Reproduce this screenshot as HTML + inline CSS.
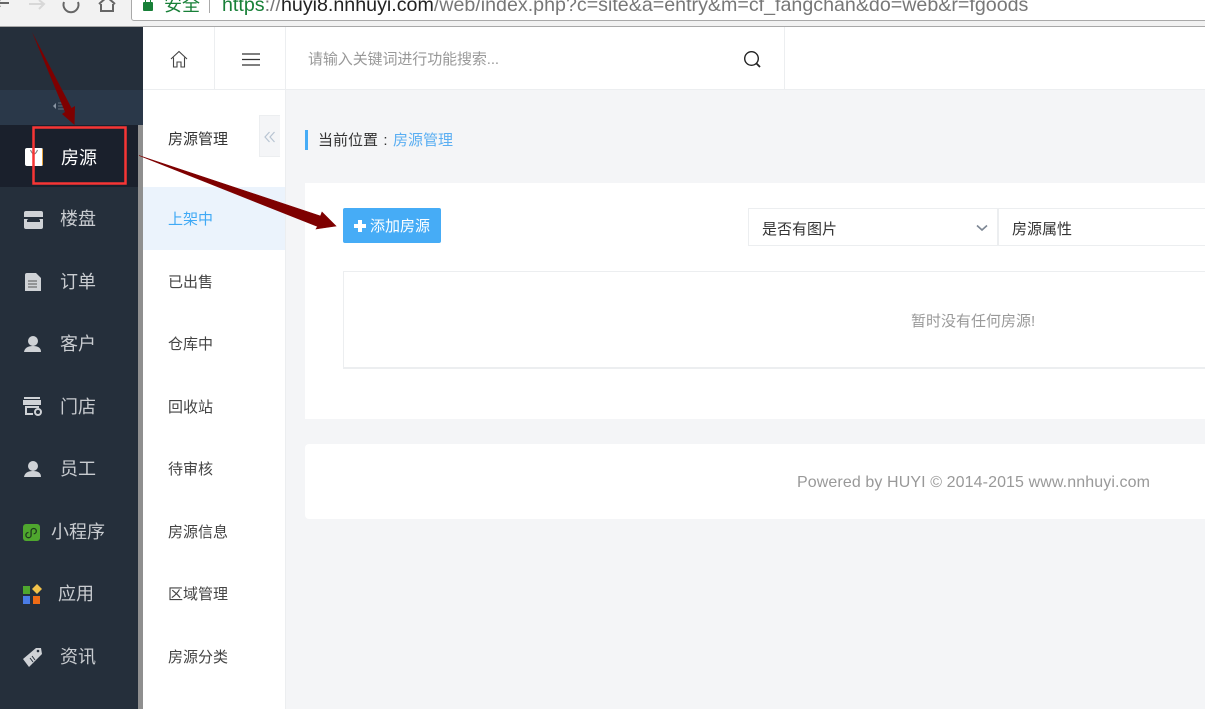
<!DOCTYPE html>
<html lang="zh"><head><meta charset="utf-8"><title>房源管理</title>
<style>
html,body{margin:0;padding:0}
body{width:1205px;height:709px;overflow:hidden;position:relative;background:#f4f5f7;font-family:"Liberation Sans","Noto Sans CJK SC",sans-serif;color:#333}
.a{position:absolute}
.t{position:absolute;white-space:nowrap;line-height:20px}
.m{font-size:18px;color:#c9ccd0}
.s{font-size:15px;color:#444;left:168px}
</style></head><body>
<!-- browser chrome -->
<div class="a" style="left:0;top:0;width:1205px;height:26px;background:#f2f2f2"></div>
<div class="a" style="left:0;top:26px;width:1205px;height:1px;background:#a8a8a8"></div>
<div class="a" style="left:131px;top:-10px;width:1080px;height:31px;background:#fff;border:1px solid #a9a9a9;border-radius:3px;box-sizing:border-box"></div>
<svg class="a" style="left:0;top:0" width="140" height="20" fill="none">
<path d="M-2 3H9M0 0L-3 3L0 7" stroke="#666" stroke-width="2"/>
<path d="M29 4H44M39 0L44 4L39 9" stroke="#d8d8d8" stroke-width="2"/>
<path d="M78 2A7.500 7.500 0 1 1 64 2" stroke="#666" stroke-width="2"/>
<path d="M101 4V11H113V4" stroke="#666" stroke-width="2"/>
<path d="M99 4L107 -3L115 4" stroke="#666" stroke-width="2"/>
</svg>
<div class="a" style="left:143px;top:2px;width:10px;height:9px;background:#188038;border-radius:1px"></div>
<div class="a" style="left:145px;top:-2px;width:4px;height:4px;border:1.500px solid #188038"></div>
<div class="t" style="left:164px;top:-5px;font-size:18px;color:#188038">安全</div>
<div class="a" style="left:209px;top:0;width:1px;height:13px;background:#aaa"></div>
<div class="t" style="left:222px;top:-5px;font-size:19.650px"><span style="color:#188038">https</span><span style="color:#777">://</span><span style="color:#222">huyi8.nnhuyi.com</span><span style="color:#777">/web/index.php?c=site&amp;a=entry&amp;m=cf_fangchan&amp;do=web&amp;r=fgoods</span></div>

<!-- sidebar -->
<div class="a" style="left:0;top:27px;width:143px;height:682px;background:#252f3b"></div>
<div class="a" style="left:0;top:90px;width:143px;height:35px;background:#2a3849"></div>
<div class="a" style="left:0;top:125px;width:138px;height:62px;background:#1a202c"></div>
<div class="a" style="left:138px;top:125px;width:5px;height:584px;background:#8f8f8f"></div>
<svg class="a" style="left:52px;top:102px" width="20" height="10"><path d="M1 4L4 1V7Z" fill="#8a95a3"/><path d="M6 1H15M6 4H15M6 7H15" stroke="#626e7c"/></svg>

<svg class="a" style="left:0;top:125px" width="138" height="584" fill="#cfd2d6">
<rect x="25" y="23" width="18" height="18" rx="2" fill="#fff"/><rect x="42" y="24" width="1" height="16" fill="#e6a23c"/><path d="M30.500 25Q34 33 37.500 25" stroke="#777" fill="none"/>
<path d="M26 86H41Q43 86 43 88V92H24V88Q24 86 26 86ZM24 94H43V102Q43 104 41 104H26Q24 104 24 102Z"/><path d="M27 95L31 92L34 94L37 92L40 95V97H27Z" fill="#252f3b"/>
<path d="M25 150Q25 148 27 148H36L41 153V166H25Z"/><path d="M28 156H37M28 159H37M28 162H37" stroke="#555"/>
<circle cx="33" cy="216" r="5"/><path d="M24 227Q25 221 33 221Q41 221 41 227Z"/>
<path d="M24 272H40V274H24ZM23 275H41V280H23ZM25 281H39V283H27V288H33V290H25Z"/><circle cx="38" cy="287" r="3" fill="none" stroke="#cfd2d6" stroke-width="2"/>
<circle cx="33" cy="341" r="5"/><path d="M24 352Q25 346 33 346Q41 346 41 352Z"/>
<rect x="23" y="399" width="17" height="17" rx="3" fill="#4fa72e"/><path d="M28.500 407.500a2.600 2.600 0 1 0 2.600 2.600v-4a2.600 2.600 0 1 1 2.600 2.600" stroke="#1f3a1f" fill="none" stroke-width="1.300"/>
<rect x="23" y="461" width="7" height="8" fill="#4fa72e"/><rect x="23" y="471" width="7" height="8" fill="#4a7ce6"/><rect x="33" y="471" width="7" height="8" fill="#ef6c16"/><path d="M37 459L42 464L37 469L32 464Z" fill="#f2c14a"/>
<path d="M23 534L36 523L41 523L42 529L29 542Z"/><path d="M32 531L35 535M30 533L33 537" stroke="#252f3b"/><circle cx="38" cy="526" r="1.300" fill="#252f3b"/>
</svg>
<div class="t m" style="left:61px;top:148px;color:#fff">房源</div>
<div class="t m" style="left:60px;top:209px">楼盘</div>
<div class="t m" style="left:60px;top:272px">订单</div>
<div class="t m" style="left:60px;top:334px">客户</div>
<div class="t m" style="left:60px;top:397px">门店</div>
<div class="t m" style="left:60px;top:459px">员工</div>
<div class="t m" style="left:51px;top:522px">小程序</div>
<div class="t m" style="left:58px;top:584px">应用</div>
<div class="t m" style="left:60px;top:647px">资讯</div>

<!-- top bar -->
<div class="a" style="left:143px;top:27px;width:1062px;height:62px;background:#fff"></div>
<div class="a" style="left:143px;top:89px;width:1062px;height:1px;background:#eceef0"></div>
<div class="a" style="left:214px;top:27px;width:1px;height:62px;background:#eceef0"></div>
<div class="a" style="left:285px;top:27px;width:1px;height:62px;background:#eceef0"></div>
<div class="a" style="left:784px;top:27px;width:1px;height:62px;background:#eceef0"></div>
<svg class="a" style="left:170px;top:50px" width="18" height="18" fill="none" stroke="#444" stroke-width="1.100"><path d="M1 9L9 1.500L17 9M3.500 7.500V17H7V12H11V17H14.500V7.500"/></svg>
<svg class="a" style="left:241px;top:52px" width="20" height="16" stroke="#333" stroke-width="1.200"><path d="M1 2H19M1 7.500H19M1 13H19"/></svg>
<div class="t" style="left:308px;top:50px;font-size:15px;letter-spacing:-.1px;color:#999">请输入关键词进行功能搜索...</div>
<svg class="a" style="left:743px;top:50px" width="19" height="19" fill="none" stroke="#222" stroke-width="1.400"><circle cx="8.500" cy="8.500" r="6.800"/><path d="M13.500 13.500L17 17" stroke-width="1.800"/></svg>

<!-- subnav -->
<div class="a" style="left:143px;top:90px;width:142px;height:619px;background:#fff"></div>
<div class="a" style="left:285px;top:90px;width:1px;height:619px;background:#eceef0"></div>
<div class="a" style="left:143px;top:187px;width:142px;height:63px;background:#ebf3fc"></div>
<div class="a" style="left:259px;top:115px;width:21px;height:42px;background:#f4f5f7;border:1px solid #eceef0;border-right:0;box-sizing:border-box"></div>
<svg class="a" style="left:264px;top:131px" width="12" height="12" fill="none" stroke="#b8c4d2" stroke-width="1.200"><path d="M5.500 1L1 6L5.500 11M10.500 1L6 6L10.500 11"/></svg>
<div class="t s" style="top:130px;color:#333">房源管理</div>
<div class="t s" style="top:210px;color:#3fa9f5">上架中</div>
<div class="t s" style="top:273px">已出售</div>
<div class="t s" style="top:335px">仓库中</div>
<div class="t s" style="top:398px">回收站</div>
<div class="t s" style="top:460px">待审核</div>
<div class="t s" style="top:523px">房源信息</div>
<div class="t s" style="top:585px">区域管理</div>
<div class="t s" style="top:648px">房源分类</div>

<!-- breadcrumb -->
<div class="a" style="left:305px;top:130px;width:3px;height:20px;background:#46acf6"></div>
<div class="t" style="left:318px;top:131px;font-size:15px;color:#333">当前位置<span style="display:inline-block;width:15px;text-align:center">:</span><span style="color:#5aaef2">房源管理</span></div>

<!-- main card -->
<div class="a" style="left:305px;top:183px;width:900px;height:236px;background:#fff"></div>
<div class="a" style="left:343px;top:208px;width:98px;height:35px;background:#46acf6;border-radius:2px"></div>
<svg class="a" style="left:354px;top:220px" width="12" height="12" fill="#fff"><path d="M4 0H8V4H12V8H8V12H4V8H0V4H4Z"/></svg>
<div class="t" style="left:370px;top:217px;font-size:15px;color:#fff">添加房源</div>
<div class="a" style="left:748px;top:208px;width:250px;height:38px;box-sizing:border-box;border:1px solid #eceef0;background:#fff"></div>
<div class="a" style="left:998px;top:208px;width:220px;height:38px;box-sizing:border-box;border:1px solid #eceef0;background:#fff"></div>
<div class="t" style="left:762px;top:220px;font-size:15px;color:#333">是否有图片</div>
<div class="t" style="left:1012px;top:220px;font-size:15px;color:#333">房源属性</div>
<svg class="a" style="left:976px;top:224px" width="12" height="8" fill="none" stroke="#7d8794" stroke-width="1.600"><path d="M1 1.500L6 6L11 1.500"/></svg>
<div class="a" style="left:343px;top:271px;width:880px;height:98px;box-sizing:border-box;border:1px solid #eceef0;border-bottom:2px solid #eceef0;background:#fff"></div>
<div class="t" style="left:911px;top:312px;font-size:15px;color:#999">暂时没有任何房源!</div>

<!-- footer card -->
<div class="a" style="left:305px;top:444px;width:910px;height:75px;background:#fff;border-radius:4px"></div>
<div class="t" style="left:797px;top:473px;font-size:16px;letter-spacing:.1px;color:#999">Powered by HUYI © 2014-2015 www.nnhuyi.com</div>

<!-- annotations -->
<svg class="a" style="left:0;top:0" width="460" height="240">
<path d="M32 32L71.500 108L75 106L74.500 125L62 114L65 112Z" fill="#7e0000"/>
<path d="M139 155.500L320.500 216L322 212L336 226L316 229L317.500 226.500Z" fill="#7e0000" stroke="#7e0000" stroke-width=".6"/>
<rect x="33.500" y="127.500" width="92" height="56" fill="none" stroke="#f73535" stroke-width="2.500"/>
</svg>
</body></html>
